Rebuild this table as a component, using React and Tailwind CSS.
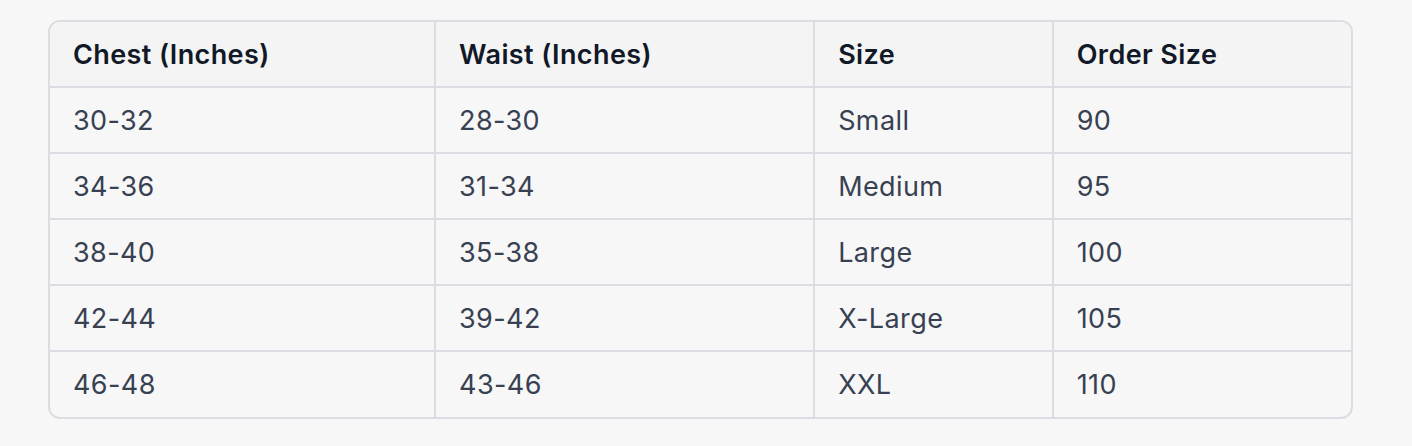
export default function App() {
  const rows = [
    ["30-32", "28-30", "Small", "90"],
    ["34-36", "31-34", "Medium", "95"],
    ["38-40", "35-38", "Large", "100"],
    ["42-44", "39-42", "X-Large", "105"],
    ["46-48", "43-46", "XXL", "110"],
  ];
  const widths = ["w-[386px]", "w-[380px]", "w-[239px]", "w-[299px]"];
  return (
    <div className="w-[1412px] h-[446px] bg-[#f7f7f7] pt-[20px] pl-[48px]" style={{ fontFamily: "Inter, 'Noto Sans', sans-serif" }}>
      <div className="w-[1305px] rounded-[12px] border-2 border-[#dcdce3] overflow-hidden">
        <table className="w-full border-collapse text-[27px] leading-none tracking-[0.4px]">
          <thead>
            <tr className="h-[65px] bg-[#f4f4f4]">
              {["Chest (Inches)", "Waist (Inches)", "Size", "Order Size"].map((h, i) => (
                <th key={h} className={`${widths[i]} text-left font-semibold text-[#111827] pl-[23px] pt-[1px] ${i > 0 ? "border-l-2 border-[#dcdce3]" : ""}`}>{h}</th>
              ))}
            </tr>
          </thead>
          <tbody>
            {rows.map((r, ri) => (
              <tr key={ri} className="h-[66px] border-t-2 border-[#dcdce3]">
                {r.map((c, i) => (
                  <td key={i} className={`pl-[23px] text-[#374151] ${i > 0 ? "border-l-2 border-[#dcdce3]" : ""}`}>{c}</td>
                ))}
              </tr>
            ))}
          </tbody>
        </table>
      </div>
    </div>
  );
}
